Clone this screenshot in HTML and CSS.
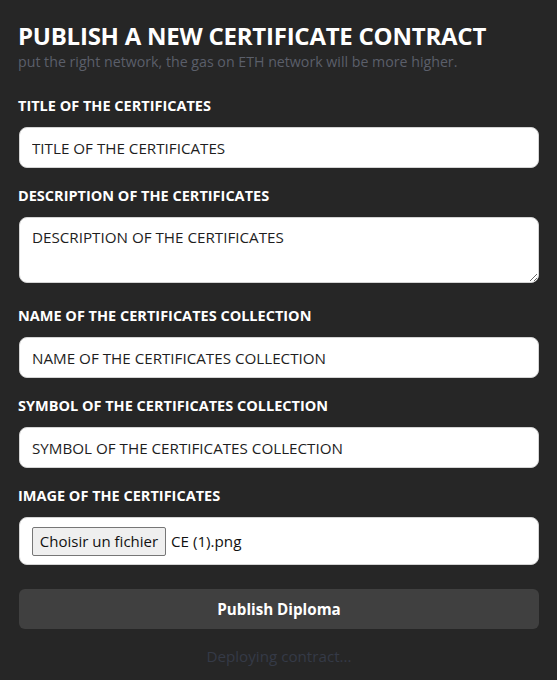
FILE: index.html
```html
<!DOCTYPE html>
<html lang="en">
<head>
<meta charset="utf-8">
<title>Publish</title>
<link rel="stylesheet" href="styles.css">
</head>
<body>
<main class="page">
  <header class="head">
    <h1 class="title">PUBLISH A NEW CERTIFICATE CONTRACT</h1>
    <p class="subtitle">put the right network, the gas on ETH network will be more higher.</p>
  </header>
  <form class="form">
    <label class="field">
      <span class="label">TITLE OF THE CERTIFICATES</span>
      <input class="input" type="text" value="TITLE OF THE CERTIFICATES">
    </label>
    <label class="field field-area">
      <span class="label">DESCRIPTION OF THE CERTIFICATES</span>
      <textarea class="input area">DESCRIPTION OF THE CERTIFICATES</textarea>
    </label>
    <label class="field">
      <span class="label">NAME OF THE CERTIFICATES COLLECTION</span>
      <input class="input" type="text" value="NAME OF THE CERTIFICATES COLLECTION">
    </label>
    <label class="field">
      <span class="label">SYMBOL OF THE CERTIFICATES COLLECTION</span>
      <input class="input" type="text" value="SYMBOL OF THE CERTIFICATES COLLECTION">
    </label>
    <div class="field field-file">
      <span class="label">IMAGE OF THE CERTIFICATES</span>
      <div class="input file">
        <span class="file-btn">Choisir un fichier</span>
        <span class="file-name">CE (1).png</span>
      </div>
    </div>
    <button type="button" class="submit">Publish Diploma</button>
    <p class="status">Deploying contract...</p>
  </form>
</main>
</body>
</html>
```
FILE: styles.css
```css
html, body {
  margin: 0;
  padding: 0;
  background: #262626;
}
body {
  font-family: "Open Sans", "Noto Sans", sans-serif;
  color: #fff;
}
.page {
  padding: 19px 18px 0 19px;
  display: flex;
  flex-direction: column;
}
.head {
  margin-bottom: 24px;
}
.title {
  margin: 0;
  font-size: 24px;
  font-weight: 700;
  line-height: 33px;
  letter-spacing: -0.24px;
  margin-left: -1px;
}
.subtitle {
  margin: 0;
  font-size: 14.2px;
  line-height: 20px;
  color: #5b5f6a;
  margin-left: -1px;
}
.form {
  display: flex;
  flex-direction: column;
}
.field {
  display: flex;
  flex-direction: column;
  margin-bottom: 18px;
}
.field-area {
  margin-bottom: 23px;
}
.field-file {
  margin-bottom: 24px;
}
.label {
  font-size: 14.5px;
  font-weight: 700;
  line-height: 20px;
  margin-bottom: 11px;
  margin-left: -1px;
}
.input {
  box-sizing: border-box;
  width: 520px;
  height: 41px;
  border: 1px solid #d4d4d4;
  border-radius: 8px;
  background: #fff;
  padding: 0 12px;
  font-family: inherit;
  font-size: 15.2px;
  color: #1e1e1e;
  outline: none;
}
.area {
  height: 66px;
  padding-top: 9px;
  line-height: 20px;
  resize: vertical;
  display: block;
}
.file {
  height: 48px;
  display: flex;
  align-items: center;
  gap: 5px;
}
.file-btn {
  box-sizing: border-box;
  height: 29px;
  width: 134px;
  display: flex;
  align-items: center;
  justify-content: center;
  background: #efefef;
  border: 1px solid #767676;
  border-radius: 2px;
  color: #111;
  font-size: 15px;
}
.file-name {
  color: #111;
  font-size: 15.2px;
}
.submit {
  width: 520px;
  height: 40px;
  border: none;
  border-radius: 6px;
  background: #404040;
  color: #fff;
  font-family: inherit;
  font-weight: 700;
  font-size: 15.2px;
  padding: 0;
}
.status {
  margin: 17px 0 0;
  text-align: center;
  font-size: 15.2px;
  line-height: 20px;
  color: #353a47;
}
```
